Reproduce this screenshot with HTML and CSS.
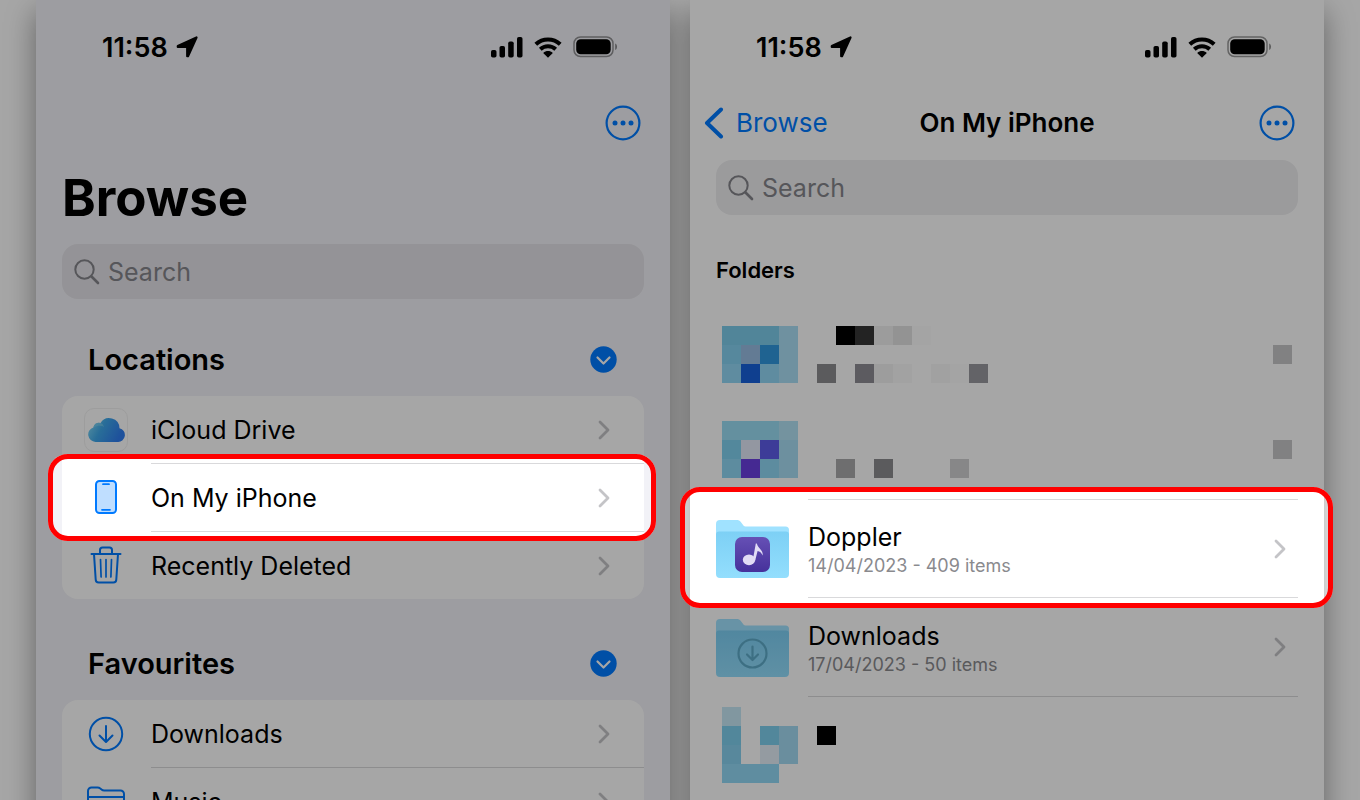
FILE: index.html
```html
<!DOCTYPE html>
<html lang="en-GB">
<head>
<meta charset="utf-8">
<meta name="viewport" content="width=device-width, initial-scale=1">
<title>Files</title>
<link rel="stylesheet" href="styles.css">
</head>
<body>
<svg class="defs" width="0" height="0" aria-hidden="true">
  <defs>
    <linearGradient id="cloud-fill" x1="0" y1="0" x2="1" y2="0.35">
      <stop offset="0" stop-color="#8be0f7"/><stop offset="0.45" stop-color="#3fa9ea"/><stop offset="1" stop-color="#2f7df0"/>
    </linearGradient>
    <linearGradient id="folder-fill" x1="0" y1="0" x2="0" y2="1">
      <stop offset="0" stop-color="#7dd0f5"/><stop offset="1" stop-color="#93defd"/>
    </linearGradient>
    <linearGradient id="app-fill" x1="0" y1="0" x2="0" y2="1">
      <stop offset="0" stop-color="#6650b5"/><stop offset="1" stop-color="#46319b"/>
    </linearGradient>
    <symbol id="arrow" viewBox="0 0 22 22"><path d="M20.500 1.500 12 20.200h-.8V11H1.800V10Z" stroke="#000" stroke-width="2.200" stroke-linejoin="round"/></symbol>
    <symbol id="signal" viewBox="0 0 32 21"><rect x="0" y="13" width="5.500" height="7.500" rx="1.800"/><rect x="8.500" y="9" width="5.500" height="11.500" rx="1.800"/><rect x="17.200" y="4.500" width="5.500" height="16" rx="1.800"/><rect x="26" y="0" width="5.500" height="20.500" rx="1.800"/></symbol>
    <symbol id="wifi" viewBox="0 0 28 21"><path d="M1.800 7.200C8.600.8 19.400.8 26.200 7.200M6.300 12.200c4.400-4 11-4 15.400 0" fill="none" stroke="#000" stroke-width="4"/><path d="M9.200 15.900c2.800-2.400 6.800-2.400 9.600 0L14 20.700Z"/></symbol>
    <symbol id="battery" viewBox="0 0 45 22"><rect x="1" y="1" width="39" height="19.500" rx="6.500" fill="none" stroke="#000" stroke-opacity=".4" stroke-width="1.500"/><rect x="3.200" y="3.200" width="34.500" height="15" rx="4.500"/><path d="M42.200 7.500c2.400 1.200 2.400 5.300 0 6.500Z" fill-opacity=".45"/></symbol>
    <symbol id="more" viewBox="0 0 36 36"><circle cx="18" cy="18" r="16.400" fill="none" stroke="currentColor" stroke-width="2.200"/><g fill="currentColor"><circle cx="10" cy="18" r="2.500"/><circle cx="18" cy="18" r="2.500"/><circle cx="26" cy="18" r="2.500"/></g></symbol>
    <symbol id="glass" viewBox="0 0 26 26"><circle cx="10.500" cy="10.500" r="9.200" fill="none" stroke="currentColor" stroke-width="2"/><path d="m17.500 17.500 6.500 6.500" stroke="currentColor" stroke-width="2.600" stroke-linecap="round"/></symbol>
    <symbol id="down" viewBox="0 0 27 27"><circle cx="13.500" cy="13.500" r="13.200" fill="#007aff"/><path d="m7.500 11.500 6 6 6-6" fill="none" stroke="#fff" stroke-width="2.200" stroke-linecap="round" stroke-linejoin="round"/></symbol>
    <symbol id="chevron" viewBox="0 0 12 20"><path d="m2 2 8 8-8 8" fill="none" stroke="currentColor" stroke-width="2.800" stroke-linecap="round" stroke-linejoin="round"/></symbol>
    <symbol id="folder" viewBox="0 0 73 58"><path d="M0 4a4 4 0 0 1 4-4h16.500c2 0 3.200.6 4.300 2l2.500 3.200c.8 1 1.700 1.300 3 1.300H69.500a3.500 3.500 0 0 1 3.500 3.500V30H0Z" fill="#a0e2ff"/><path d="M0 14.500a3 3 0 0 1 3-3h67a3 3 0 0 1 3 3V54a4 4 0 0 1-4 4H4a4 4 0 0 1-4-4Z" fill="url(#folder-fill)"/></symbol>
    <symbol id="download" viewBox="0 0 36 36"><circle cx="18" cy="18" r="16.200" fill="none" stroke="currentColor" stroke-width="2"/><path d="M18 10v15.500M11.500 19.500 18 26l6.500-6.500" fill="none" stroke="currentColor" stroke-width="2" stroke-linecap="round" stroke-linejoin="round"/></symbol>
  </defs>
</svg>

<div class="stage">
  <main class="phone phone-grouped">
    <div class="status">
      <div class="status-time">11:58 <svg width="22" height="22"><use href="#arrow"/></svg></div>
      <div class="status-icons">
        <svg width="32" height="21"><use href="#signal"/></svg>
        <svg width="28" height="21"><use href="#wifi"/></svg>
        <svg width="45" height="22"><use href="#battery"/></svg>
      </div>
    </div>
    <div class="nav">
      <button class="icon-button nav-more" type="button" aria-label="More"><svg width="36" height="36"><use href="#more"/></svg></button>
    </div>
    <h1 class="large-title">Browse</h1>
    <label class="search">
      <svg width="26" height="26" aria-hidden="true"><use href="#glass"/></svg>
      <input type="search" placeholder="Search" aria-label="Search locations">
    </label>

    <section class="group">
      <header class="group-head">
        <h2>Locations</h2>
        <button class="icon-button" type="button" aria-label="Collapse Locations"><svg width="27" height="27"><use href="#down"/></svg></button>
      </header>
      <div class="card">
        <a class="row" href="#icloud">
          <span class="row-icon"><span class="app-tile"><svg width="37" height="24" viewBox="0 0 37 24"><path d="M7.500 24A7.500 7.500 0 0 1 5.300 9.400 5.500 5.500 0 0 1 12.500 5 10.300 10.300 0 0 1 31.500 10.200 7 7 0 0 1 29.500 24Z" fill="url(#cloud-fill)"/><path d="M5.300 9.400A5.500 5.500 0 0 1 12.500 5c2 .7 3 2 3.500 4-3-2-7-1-10.700.4Z" fill="#7fd0ee" fill-opacity=".6"/></svg></span></span>
          <span class="row-body">iCloud Drive<svg class="chevron" width="12" height="20"><use href="#chevron"/></svg></span>
        </a>
        <a class="row" href="#phone">
          <span class="row-icon"><svg width="22" height="34" viewBox="0 0 22 34"><rect x="1" y="1" width="20" height="32" rx="3.500" fill="#bfdeff" stroke="#007aff" stroke-width="2"/><path d="M8 4.200h6M7 29.800h8" stroke="#007aff" stroke-width="1.800" stroke-linecap="round"/></svg></span>
          <span class="row-body">On My iPhone<svg class="chevron" width="12" height="20"><use href="#chevron"/></svg></span>
          <span class="spotlight spotlight-left"></span>
        </a>
        <a class="row" href="#deleted">
          <span class="row-icon"><svg width="32" height="38" viewBox="0 0 32 38"><g fill="none" stroke="#007aff" stroke-width="2" stroke-linecap="round" stroke-linejoin="round"><path d="M1.500 8h29M10 8V4a2.500 2.500 0 0 1 2.500-2.500h7A2.500 2.500 0 0 1 22 4v4M4 8l1.700 25.500A3 3 0 0 0 8.700 36.500h14.600a3 3 0 0 0 3-3L28 8"/><path d="M10.500 13.500l.6 17.500M16 13.500V31M21.500 13.500l-.6 17.500" stroke-width="1.700"/></g></svg></span>
          <span class="row-body">Recently Deleted<svg class="chevron" width="12" height="20"><use href="#chevron"/></svg></span>
        </a>
      </div>
    </section>

    <section class="group">
      <header class="group-head">
        <h2>Favourites</h2>
        <button class="icon-button" type="button" aria-label="Collapse Favourites"><svg width="27" height="27"><use href="#down"/></svg></button>
      </header>
      <div class="card">
        <a class="row" href="#downloads">
          <span class="row-icon"><svg width="36" height="36"><use href="#download"/></svg></span>
          <span class="row-body">Downloads<svg class="chevron" width="12" height="20"><use href="#chevron"/></svg></span>
        </a>
        <a class="row" href="#music">
          <span class="row-icon"><svg width="38" height="30" viewBox="0 0 38 30"><path d="M1 26V5a3.500 3.500 0 0 1 3.500-3.500h6c1.200 0 2 .3 2.800 1L14.500 3.500c.8.700 1.500 1 2.700 1h16.300A3.500 3.500 0 0 1 37 8v18a3 3 0 0 1-3 3H4a3 3 0 0 1-3-3ZM1 11h36" fill="none" stroke="#007aff" stroke-width="2"/></svg></span>
          <span class="row-body">Music<svg class="chevron" width="12" height="20"><use href="#chevron"/></svg></span>
        </a>
      </div>
    </section>
  </main>

  <main class="phone">
    <div class="status">
      <div class="status-time">11:58 <svg width="22" height="22"><use href="#arrow"/></svg></div>
      <div class="status-icons">
        <svg width="32" height="21"><use href="#signal"/></svg>
        <svg width="28" height="21"><use href="#wifi"/></svg>
        <svg width="45" height="22"><use href="#battery"/></svg>
      </div>
    </div>
    <div class="nav">
      <a class="back" href="#browse"><svg width="20" height="32" viewBox="0 0 20 32"><path d="M17 2.500 3 16l14 13.500" fill="none" stroke="currentColor" stroke-width="4" stroke-linecap="round" stroke-linejoin="round"/></svg><span class="back-text">Browse</span></a>
      <h1 class="nav-title">On My iPhone</h1>
      <button class="icon-button nav-more" type="button" aria-label="More"><svg width="36" height="36"><use href="#more"/></svg></button>
    </div>
    <label class="search search-spaced">
      <svg width="26" height="26" aria-hidden="true"><use href="#glass"/></svg>
      <input type="search" placeholder="Search" aria-label="Search folders">
    </label>
    <h2 class="list-title">Folders</h2>
    <div class="folders">
      <div class="mosaic">
        <svg width="272" height="76" viewBox="0 0 272 76" shape-rendering="crispEdges">
          <path fill="#7dcdec" d="M0 0h57v19H0z"/><path fill="#abdff6" d="M57 0h19v57H57z"/>
          <path fill="#84d2f1" d="M0 19h19v19H0z"/><path fill="#98bde4" d="M19 19h19v19H19z"/><path fill="#3099df" d="M38 19h19v19H38z"/>
          <path fill="#92d8f6" d="M0 38h19v19H0zM38 38h19v19H38z"/><path fill="#1862dc" d="M19 38h19v19H19z"/>
          <path d="M114 0h19v19h-19z"/><path fill="#363636" d="M133 0h19v19h-19z"/><path fill="#f0f0f0" d="M152 0h19v19h-19z"/><path fill="#e2e2e2" d="M171 0h19v19h-19z"/><path fill="#fcfcfc" d="M190 0h19v19h-19z"/>
          <path fill="#8c8c90" d="M95 38h19v19H95z"/><path fill="#8e8d94" d="M133 38h19v19h-19z"/><path fill="#f2f2f2" d="M152 38h19v19h-19z"/><path fill="#f9f9f9" d="M171 38h19v19h-19z"/><path fill="#f7f7f7" d="M209 38h19v19h-19z"/><path fill="#fcfcfc" d="M228 38h19v19h-19z"/><path fill="#99989e" d="M247 38h19v19h-19z"/>
        </svg>
        <span class="mosaic-end"></span>
      </div>
      <div class="mosaic mosaic-short">
        <svg width="272" height="57" viewBox="0 0 272 57" shape-rendering="crispEdges">
          <path fill="#9adef5" d="M0 0h57v19H0z"/><path fill="#b2e2f4" d="M57 0h19v19H57z"/><path fill="#a8def5" d="M57 19h19v38H57z"/>
          <path fill="#80d1f0" d="M0 19h19v19H0z"/><path fill="#e2e8f8" d="M19 19h19v19H19z"/><path fill="#5f5cea" d="M38 19h19v19H38z"/>
          <path fill="#90d7f5" d="M0 38h19v19H0zM38 38h19v19H38z"/><path fill="#6b3fe0" d="M19 38h19v19H19z"/>
          <path fill="#a9a9ab" d="M114 38h19v19h-19z"/><path fill="#8c8c8f" d="M152 38h19v19h-19z"/><path fill="#d0d0d2" d="M228 38h19v19h-19z"/>
        </svg>
        <span class="mosaic-end"></span>
      </div>
      <a class="folder-row" href="#doppler">
        <svg class="folder-icon" width="73" height="58" viewBox="0 0 73 58"><use href="#folder"/><rect x="19" y="17" width="35" height="35" rx="7" fill="url(#app-fill)"/><g fill="#e2dcf5"><ellipse cx="33" cy="39.800" rx="6.200" ry="5.400"/><path d="M36.800 40 39.800 23.500h1c1.300 5 6.300 6 6 12-1.500-3-3-4.200-5.200-4.600L39.200 40.500Z"/></g></svg>
        <span class="folder-body">
          <span class="folder-text"><span class="folder-name">Doppler</span><span class="folder-meta">14/04/2023 - 409 items</span></span>
          <svg class="chevron" width="12" height="20"><use href="#chevron"/></svg>
        </span>
        <span class="spotlight spotlight-right"></span>
      </a>
      <a class="folder-row" href="#downloads-folder">
        <svg class="folder-icon" width="73" height="58" viewBox="0 0 73 58"><use href="#folder"/><g fill="none" stroke="#5eabc9" stroke-width="2.200" stroke-linecap="round" stroke-linejoin="round"><circle cx="36.500" cy="34.500" r="14"/><path d="M36.500 27.500v13M31 35.500l5.500 5.500 5.500-5.500"/></g></svg>
        <span class="folder-body">
          <span class="folder-text"><span class="folder-name">Downloads</span><span class="folder-meta">17/04/2023 - 50 items</span></span>
          <svg class="chevron" width="12" height="20"><use href="#chevron"/></svg>
        </span>
      </a>
      <div class="mosaic mosaic-last">
        <svg width="272" height="76" viewBox="0 0 272 76" shape-rendering="crispEdges">
          <path fill="#c7e9f6" d="M0 0h19v19H0z"/><path fill="#7fcfee" d="M0 19h19v19H0zM38 19h19v19H38z"/><path fill="#a3daf3" d="M57 19h19v38H57z"/>
          <path fill="#88d2f0" d="M0 38h19v19H0z"/><path fill="#e4eff8" d="M38 38h19v19H38z"/><path fill="#92d9f6" d="M0 57h57v19H0z"/>
          <path d="M95 19h19v19H95z"/>
        </svg>
      </div>
    </div>
  </main>
</div>
</body>
</html>
```
FILE: styles.css
```css
* {
  box-sizing: border-box;
}

body {
  margin: 0;
  background: #fff;
  color: #000;
  font-family: Inter, "Liberation Sans", sans-serif;
  font-size: 25px;
}

h1,
h2 {
  margin: 0;
}

a {
  color: inherit;
  text-decoration: none;
}

svg {
  display: block;
  flex: none;
}

.defs {
  position: absolute;
}

.stage {
  display: grid;
  grid-template-columns: 1fr 1fr;
  gap: 20px;
  align-items: start;
  height: 100vh;
  padding: 0 36px;
  overflow: hidden;
  isolation: isolate;
}

.phone {
  position: relative;
  min-height: 110vh;
  padding: 0 26px;
}

/* Backdrop sits below both phones so that neither shadow falls on the other */
.phone::before {
  content: "";
  position: absolute;
  inset: 0;
  z-index: -1;
  background: #fff;
  box-shadow: 0 12px 28px rgba(0, 0, 0, 0.4);
}

.phone-grouped::before {
  z-index: -1;
  background: #f2f2f7;
  clip-path: inset(-40px -20px -40px -40px);
}

.phone-grouped + .phone::before {
  clip-path: inset(-40px -40px -40px -20px);
}

/* Status bar */
.status {
  display: flex;
  align-items: center;
  justify-content: space-between;
  height: 96px;
  padding: 0 26px 2px 40px;
}

.status-time {
  display: flex;
  align-items: center;
  gap: 8px;
  font-size: 27px;
  font-weight: 600;
}

.status-icons {
  display: flex;
  align-items: center;
  gap: 11px;
}

/* Navigation bar */
.nav {
  display: grid;
  grid-template-columns: 1fr auto 1fr;
  align-items: center;
  height: 54px;
  margin: 0 -12px;
}

.nav-more {
  grid-column: 3;
  justify-self: end;
  margin-right: 15px;
}

.icon-button {
  padding: 0;
  border: 0;
  background: none;
  color: #007aff;
}

.back {
  display: flex;
  align-items: center;
  gap: 12px;
  color: #007aff;
  font-size: 26px;
}

.back-text,
.nav-title {
  padding-bottom: 2px;
}

.nav-title {
  font-size: 26px;
  font-weight: 600;
}

.large-title {
  padding-top: 2px;
  font-size: 51px;
  font-weight: 700;
  line-height: 92px;
}

.search {
  display: flex;
  align-items: center;
  gap: 8px;
  height: 55px;
  padding: 0 12px;
  border-radius: 16px;
  background: #e3e2e8;
  color: #85858a;
}

.search-spaced {
  margin-top: 10px;
  background: #eeeef0;
}

.search input {
  flex: 1;
  min-width: 0;
  padding: 0;
  border: 0;
  outline: 0;
  background: none;
  font: inherit;
}

.search input::placeholder {
  color: #85858a;
  opacity: 1;
}

/* Grouped lists */
.group {
  margin-top: 40px;
}

.group + .group {
  margin-top: 44px;
}

.group-head {
  display: flex;
  align-items: center;
  justify-content: space-between;
  height: 40px;
  margin-bottom: 17px;
  padding: 0 27px 0 26px;
}

.group-head h2 {
  font-size: 29px;
  font-weight: 600;
}

.card {
  border-radius: 16px;
  background: #fff;
}

.row {
  position: relative;
  display: grid;
  grid-template-columns: 88px 1fr;
  gap: 1px;
  height: 67px;
}

.row + .row {
  height: 68px;
}

.row-icon {
  display: grid;
  place-items: center;
  color: #007aff;
}

.row-body {
  display: flex;
  align-items: center;
  justify-content: space-between;
  padding-right: 34px;
}

.row + .row .row-body {
  border-top: 1px solid #d9d9db;
}

.app-tile {
  display: grid;
  place-items: center;
  width: 44px;
  height: 44px;
  border: 1px solid #f2f2f2;
  border-radius: 10px;
}

.chevron {
  color: #c4c4c7;
}

/* Folder list */
.list-title {
  padding-top: 22px;
  font-size: 22px;
  font-weight: 600;
  line-height: 66px;
}

.folder-row {
  position: relative;
  display: flex;
  align-items: center;
  gap: 19px;
  height: 99px;
}

.folder-body {
  display: flex;
  flex: 1;
  align-items: center;
  justify-content: space-between;
  align-self: stretch;
  padding-right: 12px;
  border-bottom: 1px solid #d9d9db;
}

.mosaic + .folder-row .folder-body {
  border-top: 1px solid #d9d9db;
}

.folder-text {
  display: grid;
  gap: 2px;
  padding-top: 3px;
}

.folder-name {
  line-height: 30px;
}

.folder-meta {
  color: #8a8a8e;
  font-size: 18px;
  line-height: 24px;
}

.mosaic {
  display: flex;
  align-items: flex-start;
  justify-content: space-between;
  height: 98px;
  padding: 23px 6px 0;
}

.mosaic-short {
  padding-top: 20px;
}

.mosaic-last {
  padding-top: 10px;
}

.mosaic-end {
  width: 19px;
  height: 19px;
  margin-top: 19px;
  background: #c6c6c8;
}

/* Red frame; its outer shadow dims everything else in the same half */
.spotlight {
  position: absolute;
  z-index: 1;
  border: 5px solid #f00;
  border-radius: 20px;
  box-shadow: 0 0 0 2000px rgba(0, 0, 0, 0.35);
  pointer-events: none;
}

.spotlight-left {
  inset: -9px -12px -10px -14px;
  clip-path: inset(-2000px -24px -2000px -2000px);
}

.spotlight-right {
  inset: -12px -35px -10px -36px;
  clip-path: inset(-2000px -2000px -2000px 0);
}
```
